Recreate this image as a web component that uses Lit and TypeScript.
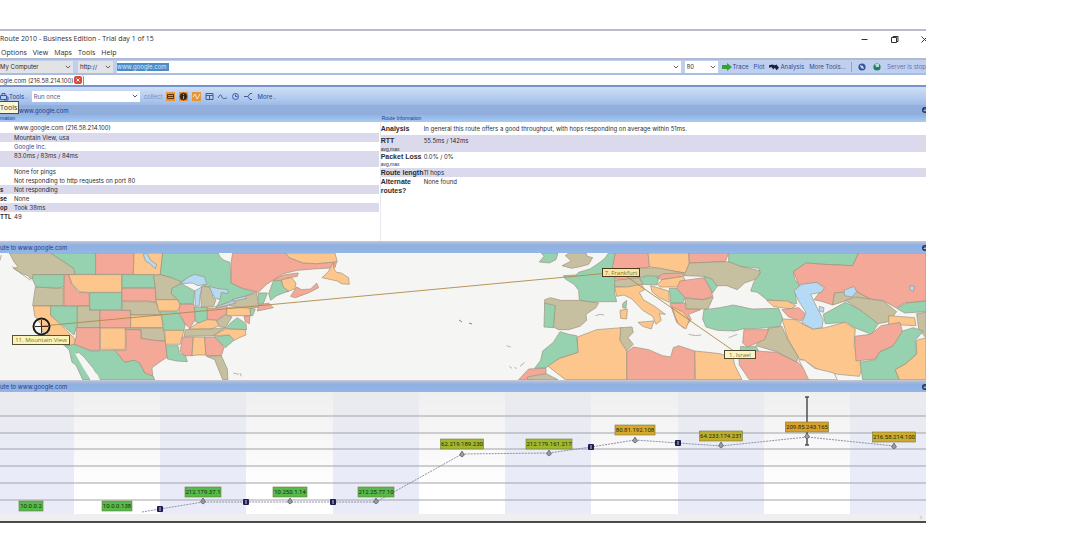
import { LitElement, html, svg, css } from "lit";
import { customElement } from "lit/decorators.js";

const G = "#97d2b0", R = "#f4a898", O = "#fdc68d", T = "#c6bfa0", B = "#b5daf5", S = "#f5f5f3";

type Shape = [string, string];

const america: Shape[] = [
  [T, "M28 38H155L225 86V103H102L108 112 92 116 84 106 62 98 40 84 54 80 42 64Z"],
  [G, "M152 38H287V102H225L221 84Z"],
  [R, "M287 38H402L400 102H287Z"],
  [O, "M402 38H488L481 103H400Z"],
  [G, "M488 38H655L660 50 672 60 690 66 693 128 728 145 775 150 735 168 700 178 660 196 648 202 660 180 630 145 600 130 575 105 540 128 515 112 481 103Z"],
  [R, "M698 38H856L868 52 910 68 950 70 1010 64 1005 82 940 86 892 90 850 100 822 118 800 132 775 156 728 144 694 128V62Z"],
  [O, "M856 38H1005L1012 64 950 70 910 68 868 52Z"],
  [O, "M1000 66L985 94 966 112 1012 122 1024 130 1048 132 1046 112 1024 98 1010 96 1002 86Z"],
  [R, "M820 120L850 104 895 98 892 108 858 114 842 130Z"],
  [O, "M845 118L875 112 888 128 885 145 860 155 848 138Z"],
  [R, "M872 168L890 140 905 148 932 146 950 128 956 142 925 158 886 172Z"],
  [G, "M820 122L843 120 850 140 866 152 830 166 812 180 806 160Z"],
  [G, "M98 103H193V138L172 144 108 140 98 118Z"],
  [T, "M106 140L172 144 190 142V196H98Z"],
  [O, "M100 197H152V225L226 296 222 318 192 316 176 296 128 276 122 250 104 228Z"],
  [G, "M152 197H232V252L222 284 152 225Z"],
  [R, "M193 103H206L214 130 236 156 268 158V196H192V138Z"],
  [O, "M206 103H365V156H268L240 155 216 130Z"],
  [G, "M269 157H365V209H269Z"],
  [T, "M232 197H269V210H300V262H232Z"],
  [R, "M300 210H392V262H300Z"],
  [G, "M366 103H461L466 142H366Z"],
  [R, "M366 144H466L468 186 445 182H366Z"],
  [T, "M366 184H445L470 188 482 223H392V210H366Z"],
  [O, "M392 224H484L490 262H392Z"],
  [R, "M230 262H300V330H272L222 312 228 292Z"],
  [O, "M301 263H376V327H301Z"],
  [T, "M376 263H491L495 302 460 300 423 294V268H376Z"],
  [R, "M378 268H423V294L460 300 496 303 502 350 484 362 456 382 458 408 434 398 420 370 404 360 374 366 344 330H378Z"],
  [G, "M222 312L272 332 344 330 374 366 404 360 420 370 434 398 460 408 464 418H300L280 384 252 350 236 336 226 340 256 386 270 418H248L228 374 216 366 208 330 196 318Z"],
  [T, "M461 107L480 103 515 112 548 126 516 144 514 160 532 178H468L466 142Z"],
  [G, "M516 144L545 130 584 152 580 190 540 190 532 176 514 160Z"],
  [O, "M468 178H532L542 196 532 212H476Z"],
  [G, "M480 214H532L556 252 552 270H490L488 240Z"],
  [O, "M494 270H552L540 312H497Z"],
  [G, "M498 316H534L538 340 556 344 562 364 530 362 502 356Z"],
  [R, "M540 192H582L586 236 570 264 556 252 536 214Z"],
  [G, "M584 200H622V240L600 248 586 244Z"],
  [R, "M622 204L650 204 682 194 678 222 650 240 622 236Z"],
  [T, "M604 138L628 140 640 156 638 170 648 178 640 200H604L602 166Z"],
  [O, "M566 266L590 250 622 238 650 240 658 256 634 266Z"],
  [T, "M556 268L634 266 676 262 640 286 552 288Z"],
  [R, "M548 290H580L576 346 556 346 540 334Z"],
  [O, "M580 290H614L618 344H590L576 346Z"],
  [R, "M614 290H648L672 322 664 346H618Z"],
  [T, "M620 348L664 346 682 386 684 418H668L652 378 644 358Z"],
  [G, "M644 290L688 284 704 298 676 322Z"],
  [O, "M640 286L676 266 736 268 738 284 718 292 704 300 688 284Z"],
  [G, "M676 264L694 246 712 232 738 250 740 268Z"],
  [T, "M650 242L678 222 696 230 676 262 658 258Z"],
  [O, "M680 202H750L752 226H680Z"],
  [T, "M686 196L704 178 736 168 770 156 776 200 752 204Z"],
  [G, "M750 204L766 206 758 226 752 226Z"],
  [G, "M775 158H802L790 190 776 192Z"],
  [R, "M776 194L806 188 820 202 772 212Z"],
  [R, "M732 228L750 226 748 250 736 244Z"],
  [B, "M540 130L566 110 584 102 614 110 620 132 594 136 578 128Z"],
  [B, "M584 152L606 140 600 166 598 196 586 198Z"],
  [B, "M628 138L650 144 684 148 684 160 664 156 660 178 644 172 636 158Z"],
  [B, "M644 200L700 182 708 188 660 200Z"],
  [B, "M696 178L734 168 740 174 704 182Z"],
  [B, "M430 42L440 38 452 60 470 72 466 86 450 70 436 62Z"],
];

const eurasia: Shape[] = [
  [G, "M118 65L132 48 124 38H174L168 58 148 68Z"],
  [T, "M186 76L214 62 196 46 206 38H258L262 48 278 52 266 72 236 80 214 84Z"],
  [G, "M270 86L300 66 316 52 326 38H346L338 92 346 122 344 160 350 184 302 184 270 186 238 178 236 150 222 132 196 116 190 106 228 104 236 96Z"],
  [R, "M346 38H444L450 80 412 84 422 112 380 118 346 116 336 86Z"],
  [O, "M444 38H566L568 72 556 98 520 92 470 84 448 78Z"],
  [R, "M566 38H686L676 64 568 68Z"],
  [T, "M568 68L676 64 704 66 722 78 782 92 774 114 734 128 712 148 680 136 650 136 612 108 552 106Z"],
  [G, "M686 38H1076L1058 76 972 72 918 68 880 94 884 116 898 136 886 158 890 190 840 182 800 178 772 156 752 152 762 124 782 98 776 84 722 78 686 64Z"],
  [R, "M880 94L918 68 972 72 1058 76 1076 38H1278V182L1214 188 1188 202 1148 180 1110 176 1066 152 1004 158 998 194 968 184 942 178 962 152 972 146 950 126 898 136Z"],
  [T, "M1004 158L1066 152 1110 176 1036 182 998 194Z"],
  [T, "M410 84L470 82 552 98 540 108 470 112 418 110Z"],
  [T, "M344 120L418 112 430 132 380 142 344 138Z"],
  [G, "M420 116L440 106 478 108 470 134 430 132Z"],
  [R, "M470 112L490 100 552 98 550 108 486 118Z"],
  [O, "M472 132L486 118 550 108 556 122 530 140 480 140Z"],
  [R, "M540 122L612 112 634 150 638 168 610 178 556 172 530 146Z"],
  [G, "M612 108L636 116 652 138 638 158Z"],
  [G, "M508 144L530 144 554 172 548 188 512 188Z"],
  [T, "M554 174L610 178 640 170 624 206 560 206Z"],
  [O, "M452 136L506 152 508 186 478 172 456 154Z"],
  [R, "M510 190L556 188 556 206 602 208 566 222 574 238 552 264 530 246 518 212Z"],
  [O, "M516 200L548 214 568 238 558 266 536 252 526 230Z"],
  [O, "M344 140L380 140 424 132 434 148 418 156 430 178 464 198 496 222 478 220 484 240 468 252 458 228 428 210 396 176 372 164 350 168Z"],
  [O, "M414 246L462 242 454 266 428 258Z"],
  [G, "M368 190L380 180 378 204 368 202Z"],
  [O, "M360 210L382 206 380 236 362 234Z"],
  [T, "M134 178L152 172 182 180 236 180 296 188 288 202 258 222 260 240 240 258 206 268 176 268 160 260 164 200 134 192Z"],
  [G, "M134 188L166 196 160 262 132 260Z"],
  [G, "M612 208L660 202 700 194 756 206 836 204 848 234 840 258 780 264 728 266 704 272 652 270 618 260 608 236Z"],
  [O, "M800 180L862 182 888 196 872 206 820 198Z"],
  [R, "M846 208L896 202 918 222 904 242 866 230Z"],
  [G, "M970 222L1036 186 1100 218 1134 252 1114 282 1064 262 1040 246 976 250Z"],
  [T, "M1036 180L1066 170 1150 182 1190 214 1166 244 1134 250 1090 216Z"],
  [G, "M1190 204L1220 188 1278 182V214L1214 218Z"],
  [O, "M1166 226L1244 232 1248 256 1166 252Z"],
  [T, "M1250 220L1278 216V292L1256 266Z"],
  [O, "M846 236L886 238 914 254 938 266 976 262 1034 246 1066 266 1062 318 1088 378 1078 408 1014 402 964 394 940 378 912 360 898 356 864 296Z"],
  [R, "M1064 288L1112 282 1144 256 1200 246 1208 276 1178 318 1140 334 1126 356 1068 362Z"],
  [G, "M1080 366L1126 358 1140 334 1178 318 1208 272 1240 262 1270 272 1246 300 1250 340 1218 370 1186 388 1198 418H1088Z"],
  [O, "M1250 300L1278 292V418H1198L1186 388 1218 370 1250 342Z"],
  [T, "M804 264L846 258 864 300 894 348 890 366 830 334 768 316Z"],
  [R, "M732 268H806L794 298 742 320 728 308Z"],
  [G, "M722 318L742 320 768 318 776 332 720 340Z"],
  [R, "M716 342L768 332 830 336 896 368 924 396 934 418H748L718 374Z"],
  [O, "M584 332L624 336 660 340 700 354 704 374 726 418H586Z"],
  [R, "M380 336L400 320 446 328 488 346 512 350 520 322 536 316 584 332V418H380Z"],
  [O, "M232 290L290 268 364 262 360 300 380 326V418H196L142 376 178 354 234 336Z"],
  [T, "M362 262L396 260 400 276 384 292 400 312 380 332 360 300Z"],
  [G, "M180 274L206 282 230 286 234 336 178 354 138 382 104 384 122 360 128 332 160 306Z"],
  [R, "M56 418L86 386 138 384V406L96 418Z"],
  [T, "M82 410L138 400 174 418H82Z"],
  [S, "M896 358L914 360 944 384 1002 398 1012 418H926L912 388Z"],
  [B, "M882 152L904 132 950 126 974 142 964 156 932 162 950 200 970 238 966 262 940 266 906 248 918 216 896 182Z"],
  [B, "M1032 150L1062 138 1070 154 1056 170 1034 166Z"],
  [B, "M958 198L972 202 970 216 958 212Z"],
  [B, "M1230 136L1244 138 1240 154 1230 148Z"],
];

const drawShapes = (list: Shape[]) =>
  list.map(([c, d]) => svg`<path class="land" fill=${c} d=${d}></path>`);

interface Hop { ip: string; x: number; top: number; w: number; y?: number; c: string }
const hops: Hop[] = [
  { ip: "10.0.0.2", x: 31, top: 500, w: 24, c: "#55bb4a" },
  { ip: "10.0.0.138", x: 117, top: 500, w: 30, c: "#55bb4a" },
  { ip: "212.179.37.1", x: 203, top: 486, w: 36, y: 500, c: "#55bb4a" },
  { ip: "10.250.1.14", x: 290, top: 486, w: 34, y: 500, c: "#55bb4a" },
  { ip: "212.25.77.10", x: 376, top: 486, w: 36, y: 500, c: "#55bb4a" },
  { ip: "62.219.189.230", x: 462, top: 438, w: 43, y: 453, c: "#a3b82c" },
  { ip: "212.179.161.217", x: 549, top: 438, w: 46, y: 452, c: "#a3b82c" },
  { ip: "80.81.192.108", x: 635, top: 424, w: 40, y: 439, c: "#d9a82b" },
  { ip: "64.233.174.231", x: 721, top: 430, w: 43, y: 444, c: "#bfae2b" },
  { ip: "209.85.243.165", x: 807, top: 421, w: 43, y: 435, c: "#d9a02b" },
  { ip: "216.58.214.100", x: 894, top: 431, w: 43, y: 445, c: "#cfaa2b" },
];
const changes = [[160, 508], [246, 501], [333, 501], [591, 446], [678, 442]];
const gridY = [415, 432, 448, 465, 482, 499];
const shaded = [0, 160, 333, 505, 678, 850];

const chevron = html`<svg class="chev" viewBox="0 0 6 4"><path d="M.8.8 3 3 5.200.8"></path></svg>`;
const gear = svg`<svg class="gear" viewBox="0 0 8 8"><circle cx="5" cy="4" r="3" fill="#23366e"></circle><path d="M3.500 4.500h3M5 2.500v3" stroke="#9fb6e4"></path></svg>`;

@customElement("app-root")
export class AppRoot extends LitElement {
  static styles = css`
    :host {
      display: block;
      padding: 29px 165px 0 0;
      background: #fff;
      min-height: 100vh;
      box-sizing: border-box;
      font: 6px/9px Inter, "Liberation Sans", sans-serif;
      color: #2c2c30;
    }
    button, input, select {
      font: inherit; color: inherit; border: 0; padding: 0; margin: 0;
      background: none; border-radius: 0; appearance: none; outline: none;
    }
    svg { display: block; }
    a { color: #3d3f94; text-decoration: none; }
    .window { overflow: hidden; border-top: 2px solid #b9bdcb; border-bottom: 2px solid #4b4b4f; }
    .title { display: flex; justify-content: space-between; height: 16px; align-items: center; font: 7px/10px "Open Sans", sans-serif; }
    .title h1 { font: inherit; margin: 0; white-space: nowrap; }
    .winbtns { display: flex; gap: 21px; margin-right: -3px; }
    .winbtns svg { width: 9px; height: 9px; fill: none; stroke: #333; }
    .menu { display: flex; gap: 6px; height: 11px; padding-left: 1px; align-items: center; font: 7px/10px "Open Sans", sans-serif; }
    .address { display: flex; align-items: center; height: 17px; box-sizing: border-box; border-top: 2px solid #b3b9cf; border-bottom: 2px solid #a9bde2; background: #bed0ee; }
    .combo { display: flex; align-items: center; height: 12px; background: #e3e3e6; padding-right: 2px; margin-right: 5px; }
    .combo select { flex: 1; height: 12px; }
    .combo.host { width: 71px; }
    .combo.proto { width: 31px; padding-left: 2px; margin-right: 4px; }
    .combo.port { width: 29px; padding-left: 2px; background: #fff; margin-right: 4px; }
    .combo.url { flex: 1; background: #fff; margin-right: 4px; }
    .combo.url input { width: 52px; height: 8px; background: #4c8cc9; color: #d9ebfa; }
    .combo.url .fill { flex: 1; }
    .chev { width: 6px; height: 4px; fill: none; stroke: #666; flex: none; }
    .actions { display: flex; align-items: center; gap: 5px; color: #34478e; white-space: nowrap; }
    .actions button { display: flex; align-items: center; gap: 1px; }
    .actions svg { width: 10px; height: 8px; }
    .status-note { color: #6a6fb0; }
    .sep { width: 1px; height: 10px; background: #8fa6d4; }
    .tabs { height: 10px; display: flex; border-bottom: 2px solid #7593cf; background: #fff; }
    .tab { display: flex; align-items: center; border-right: 1px solid #7593cf; padding-right: 1px; border-radius: 0 3px 0 0; white-space: nowrap; color: #333; }
    .tab svg { width: 8px; height: 8px; }
    .tools { height: 18px; display: flex; align-items: center; background: linear-gradient(#cfdff6, #b3cbee 60%, #9db9e6); color: #27408f; gap: 4px; }
    .tools button { display: flex; align-items: center; }
    .tools svg { width: 9px; height: 9px; fill: none; stroke: #3a5da6; }
    .tools .combo { width: 104px; height: 11px; background: #fff; margin: 0; padding-left: 2px; color: #56587e; }
    .tools .combo .chev { width: 6px; height: 4px; }
    .tools .faded { color: #7d8fc2; }
    .tools .on { background: #e5963b; }
    .tools .on svg { stroke: #5a3514; }
    .tools .label { white-space: nowrap; }
    .bar { display: flex; align-items: center; justify-content: space-between; height: 12px; box-sizing: border-box; background: linear-gradient(#b4bfd8, #8fb0e2 30%, #93b6e6); border-top: 1px solid #c4c8d4; color: #1f3c86; }
    .bar h2 { font: inherit; margin: 0; white-space: nowrap; }
    .bar.first { height: 10px; position: relative; border-top: 0; background: #91aedd; padding-left: 19px; }
    .tip { position: absolute; left: -1px; top: -4px; height: 11px; width: 18px; border: 1px solid #4b4b4b; background: #fbf9d5; color: #333; font: 7px/11px "Open Sans", sans-serif; }
    .gear { width: 8px; height: 8px; margin-right: -2px; }
    .sub { display: grid; grid-template-columns: 41fr 59fr; height: 7px; background: linear-gradient(#8fb4e6, #a9cbf0); font: 5px/7px "Liberation Sans", sans-serif; color: #1f3c86; }
    .sub span + span { padding-left: 2px; }
    .info { display: grid; grid-template-columns: 41fr 59fr; height: 119px; background: #fff; }
    .info table { border-collapse: collapse; width: 100%; table-layout: fixed; align-self: start; }
    .info section + section { border-left: 1px solid #e9e9ee; }
    .info section { padding-right: 1px; }
    .info section + section { padding-right: 0; }
    th, td { padding: 0; vertical-align: top; text-align: left; height: 9px; line-height: 9px; }
    th { width: 14px; white-space: nowrap; font-weight: bold; }
    .route th { width: 43px; white-space: normal; font-family: "Liberation Sans", sans-serif; font-size: 7px; }
    .route th small { display: block; font: 5px/6px "Liberation Sans", sans-serif; }
    .route th.one { white-space: nowrap; }
    .band { background: #dbd9ec; }
    .r11 > * { height: 11px; line-height: 11px; }
    .r13 > * { height: 13px; line-height: 13px; }
    .r16 > * { height: 16px; }
    .r17 > * { height: 17px; line-height: 11px; }
    .r18 > * { height: 18px; }
    .map svg { width: 100%; height: 127px; background: #f5f5f3; }
    .land { stroke: #9b917c; stroke-width: 2px; stroke-linejoin: round; }
    .chart svg { width: 100%; height: 122px; }
    .maptext { font: 6px "Open Sans", sans-serif; fill: #7b7428; text-anchor: middle; }
    .iptext { font: 6px Roboto, sans-serif; fill: #1d2a12; text-anchor: middle; }
    .foot { height: 7px; background: #efefef; display: flex; justify-content: flex-end; padding-right: 2px; }
    .foot svg { width: 6px; height: 7px; }
  `;

  private bar(text: string) {
    return html`<div class="bar"><h2>${text}</h2>${gear}</div>`;
  }

  private titleBar() {
    return html`
      <header class="title">
        <h1>Route 2010 - Business Edition - Trial day 1 of 15</h1>
        <div class="winbtns">
          <button aria-label="Minimize"><svg viewBox="0 0 9 9"><path d="M1.500 4.500h6"></path></svg></button>
          <button aria-label="Restore"><svg viewBox="0 0 9 9"><path d="M1.500 2.500h5v5h-5zM3 2.500v-1h5v5H6.500"></path></svg></button>
          <button aria-label="Close"><svg viewBox="0 0 9 9"><path d="M1.500 1.500l6 6M7.500 1.500l-6 6"></path></svg></button>
        </div>
      </header>
      <nav class="menu">
        ${["Options", "View", "Maps", "Tools", "Help"].map((m) => html`<button>${m}</button>`)}
      </nav>`;
  }

  private addressBar() {
    return html`
      <div class="address">
        <div class="combo host"><select aria-label="Source"><option>My Computer</option></select>${chevron}</div>
        <div class="combo proto"><select aria-label="Protocol"><option>http://</option></select>${chevron}</div>
        <div class="combo url"><input aria-label="Address" value="www.google.com" /><span class="fill"></span>${chevron}</div>
        <div class="combo port"><select aria-label="Port"><option>80</option></select>${chevron}</div>
        <div class="actions">
          <button><svg viewBox="0 0 10 8"><path d="M0 2h5V0l5 4-5 4V6H0z" fill="#35a235"></path></svg>Trace</button>
          <button>Plot</button>
          <button><svg viewBox="0 0 12 8"><path d="M0 2l4-1 3 1 2-1 3 4-3 3-2-3-2 2-2-3-3 1z" fill="#1c2340"></path></svg>Analysis</button>
          <button>More Tools...</button>
          <span class="sep"></span>
          <svg viewBox="0 0 10 8"><circle cx="5" cy="4" r="3.600" fill="#35569f"></circle><path d="M3 2l3 1 1 3-3-1z" fill="#c6d8f4"></path></svg>
          <svg viewBox="0 0 10 8"><circle cx="5" cy="4" r="3.600" fill="#217e70"></circle><path d="M3 1h4v3H4z" fill="#b5ddd7"></path></svg>
          <span class="status-note">Server is stop</span>
        </div>
      </div>
      <div class="tabs">
        <div class="tab">ogle.com (216.58.214.100)
          <button aria-label="Close tab"><svg viewBox="0 0 8 8"><rect width="8" height="8" rx="2" fill="#dd4a36"></rect><path d="M2.500 2.500l3 3M5.500 2.500l-3 3" stroke="#fff"></path></svg></button>
        </div>
      </div>`;
  }

  private toolBar() {
    return html`
      <div class="tools">
        <button><svg viewBox="0 0 9 9"><path d="M.5 3.500h6v4h-6zM2 3V1.500h3V3M6.500 5H8v3H4"></path></svg>Tools .</button>
        <div class="combo"><select aria-label="Run"><option>Run once</option></select>${chevron}</div>
        <span class="faded label">collect</span>
        <button class="on" aria-label="Table"><svg viewBox="0 0 9 9"><path d="M1.500 2.500h6v4h-6zM2 4.500h5"></path></svg></button>
        <button class="on" aria-label="Info"><svg viewBox="0 0 9 9"><circle cx="4.500" cy="4.500" r="3.500" fill="#3a2412"></circle><path d="M4.500 4v3M4.500 2v1" stroke="#e5963b"></path></svg></button>
        <button class="on" aria-label="Graph"><svg viewBox="0 0 9 9"><path d="M1 5l2-3 2 5 3-5" stroke="#fbe3bb"></path></svg></button>
        <button aria-label="Calendar"><svg viewBox="0 0 9 9"><path d="M1 1.500h7v6H1zM1 3.500h7M4.500 3v4"></path></svg></button>
        <button aria-label="Trend"><svg viewBox="0 0 9 9"><path d="M0 6c2-4 3-4 4-1s3 1 5 1"></path></svg></button>
        <button aria-label="History"><svg viewBox="0 0 9 9"><circle cx="4.500" cy="4.500" r="3"></circle><path d="M4.500 2.500v2h2"></path></svg></button>
        <button aria-label="Share"><svg viewBox="0 0 9 9"><path d="M0 4.500h4M8 1.500H6l-2 3 2 3h2"></path></svg></button>
        <button>More .</button>
      </div>
      <div class="bar first"><span class="tip" role="tooltip">Tools</span><h2>www.google.com</h2>${gear}</div>
      <div class="sub"><span>mation</span><span>Route Information</span></div>`;
  }

  private info() {
    return html`
      <div class="info">
        <section>
          <table class="details">
            <tr class="r11"><th></th><td>www.google.com (216.58.214.100)</td></tr>
            <tr class="band"><th></th><td>Mountain View, usa</td></tr>
            <tr><th></th><td><a href="#">Google Inc.</a></td></tr>
            <tr class="band r16"><th></th><td>83.0ms / 83ms / 84ms</td></tr>
            <tr class="r18"><th></th><td>None for pings<br />Not responding to http requests on port 80</td></tr>
            <tr class="band"><th>s</th><td>Not responding</td></tr>
            <tr><th>se</th><td>None</td></tr>
            <tr class="band"><th>op</th><td>Took 38ms</td></tr>
            <tr><th>TTL</th><td>49</td></tr>
          </table>
        </section>
        <section>
          <table class="route">
            <tr class="r13"><th>Analysis</th><td>In general this route offers a good throughput, with hops responding on average within 51ms.</td></tr>
            <tr class="band r17"><th>RTT<small>avg,max</small></th><td>55.5ms / 142ms</td></tr>
            <tr class="r16"><th class="one">Packet Loss<small>avg,max</small></th><td>0.0% / 0%</td></tr>
            <tr class="band"><th class="one">Route length</th><td>11 hops</td></tr>
            <tr><th>Alternate routes?</th><td>None found</td></tr>
          </table>
        </section>
      </div>`;
  }

  private map() {
    return html`
      <div class="map">
        <svg viewBox="0 0 926 127" preserveAspectRatio="xMinYMin slice" role="img" aria-label="Route map">
          <g transform="scale(.3333) translate(0 -38)">
            ${drawShapes(america)}
            <path d="M224 338l18 8 20 30 30 26 8 17h-28l-22-36z" fill=${S}></path>
            <path class="land" d="M36 78l30 24 26 18M700 398l16 4M720 398l4 10M4 44l-4 16" fill="none"></path>
          </g>
          <g transform="translate(500 0) scale(.3333) translate(0 -38)">
            ${drawShapes(eurasia)}
            <path class="land" d="M20 316l12 4M28 378l8 6M44 382l6 2M60 378l14-12M286 226l14-4 12 2M566 282l20 4 18-2M686 292l26-10" fill="none"></path>
          </g>
          <path d="M459 67l3 2M469 70l3 1" fill="none" stroke="#8b8474"></path>
          <path d="M42 73L620 19 741 103" fill="none" stroke="#b08a4a" stroke-width=".9"></path>
          <rect x="12.500" y="82.500" width="57" height="9" fill="#fbf3b8" stroke="#55523a"></rect>
          <text class="maptext" x="41" y="89">11. Mountain View</text>
          <rect x="602.500" y="15.500" width="37" height="8" fill="#fbe6a4" stroke="#4b3a22"></rect>
          <text class="maptext" x="621" y="22">7. Frankfurt</text>
          <rect x="724.500" y="97.500" width="31" height="8" fill="#fbf3c4" stroke="#4b4a32"></rect>
          <text class="maptext" x="740" y="104">1. Israel</text>
          <circle cx="41.500" cy="73.500" r="8" fill="none" stroke="#1c1c1c" stroke-width="2"></circle>
          <path d="M41.500 67v13M35 73.500h13" stroke="#3a2a20"></path>
        </svg>
      </div>`;
  }

  private chart() {
    return html`
      <div class="chart">
        <svg viewBox="0 391 926 122" preserveAspectRatio="xMinYMin slice" role="img" aria-label="Response time per hop">
          <defs>
            <linearGradient id="w" x2="0" y2="1"><stop offset="0" stop-color="#efefef"></stop><stop offset=".8" stop-color="#fff"></stop></linearGradient>
            <linearGradient id="l" x2="0" y2="1"><stop offset="0" stop-color="#eaeaee"></stop><stop offset=".6" stop-color="#e9ecf8"></stop></linearGradient>
          </defs>
          <rect y="391" width="926" height="122" fill="url(#w)"></rect>
          ${shaded.map((x, i) => svg`<rect x=${x} y="391" width=${i ? 86 : 74} height="122" fill="url(#l)"></rect>`)}
          ${gridY.map((y) => svg`<path d="M0 ${y}H926" stroke="#a3a3a8"></path>`)}
          <path d="M142 511L160 508 203 501H376L462 453 549 452 591 446 635 439 678 442 721 445 807 436 894 445" fill="none" stroke="#8284a0" stroke-width=".9" stroke-dasharray="2 1"></path>
          <path d="M807 396V444M805 396h4M805 444h4" stroke="#4d4d55" stroke-width="1.500"></path>
          ${changes.map(([x, y]) => svg`<rect x=${x - 3} y=${y - 3} width="6" height="6" rx="1" fill="#1d1d52"></rect><path d="M${x} ${y - 2}v4" stroke="#c9cbe8"></path>`)}
          ${hops.map((h) => svg`
            ${h.y ? svg`<path d="M${h.x} ${h.y - 3}l2.500 4-2.500 2-2.500-2z" fill="#9a9aa4" stroke="#55555e" stroke-width=".7"></path>` : ""}
            <rect x=${h.x - h.w / 2} y=${h.top} width=${h.w} height="10" fill=${h.c} stroke="#6f7a3a" stroke-width=".6"></rect>
            <text class="iptext" x=${h.x} y=${h.top + 7}>${h.ip}</text>`)}
        </svg>
      </div>
      <footer class="foot"><svg viewBox="0 0 6 8"><path d="M2 2l2 2-2 2" fill="none" stroke="#aaa"></path></svg></footer>`;
  }

  render() {
    return html`
      <main class="window">
        ${this.titleBar()} ${this.addressBar()} ${this.toolBar()} ${this.info()}
        ${this.bar("ute to www.google.com")} ${this.map()}
        ${this.bar("ute to www.google.com")} ${this.chart()}
      </main>`;
  }
}
